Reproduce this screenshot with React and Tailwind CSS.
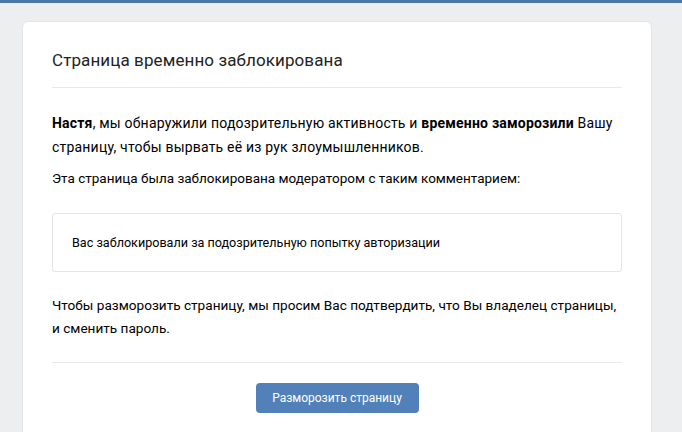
import React from 'react';

const font = { fontFamily: 'Roboto, "Open Sans", sans-serif' };

export default function App() {
    return (
        <div className="w-[682px] h-[432px] overflow-hidden bg-[#edeef0] text-[#000]" style={font}>
            {/* top bar */}
            <div className="h-[3px] bg-[#4a76a8]" />

            <div className="pt-[18px] pl-[22px]">
                <div className="w-[630px] h-[420px] bg-white rounded-[6px] border border-[#e3e4e8] px-[29px]">
                    <div className="pt-[26px] pb-[15px] border-b border-[#e7e8ec]">
                        <h1 className="text-[17px] tracking-[0.1px] leading-[24px] text-[#222]">Страница временно заблокирована</h1>
                    </div>

                    <div className="pt-[23px] leading-[23px] text-[#000]">
                        <p className="text-[14px] tracking-[0.2px] leading-[24px]">
                            <b className="font-bold">Настя</b>, мы обнаружили подозрительную активность и{' '}
                            <b className="font-bold">временно заморозили</b> Вашу
                            <br />
                            страницу, чтобы вырвать её из рук злоумышленников.
                        </p>
                        <p className="mt-[8px] text-[13.5px]">Эта страница была заблокирована модератором с таким комментарием:</p>

                        <div className="mt-[23px] h-[59px] flex items-center px-[19px] border border-[#e3e4e8] rounded-[3px] text-[12.6px]">
                            Вас заблокировали за подозрительную попытку авторизации
                        </div>

                        <p className="mt-[22px] text-[13.6px] whitespace-nowrap">
                            Чтобы разморозить страницу, мы просим Вас подтвердить, что Вы владелец страницы,
                            <br />
                            и сменить пароль.
                        </p>
                    </div>

                    <div className="mt-[22px] border-t border-[#e7e8ec] pt-[20px] flex justify-center">
                        <button className="w-[163px] h-[30px] rounded-[4px] bg-[#5181b8] text-white text-[12px]">
                            Разморозить страницу
                        </button>
                    </div>
                </div>
            </div>
        </div>
    );
}
